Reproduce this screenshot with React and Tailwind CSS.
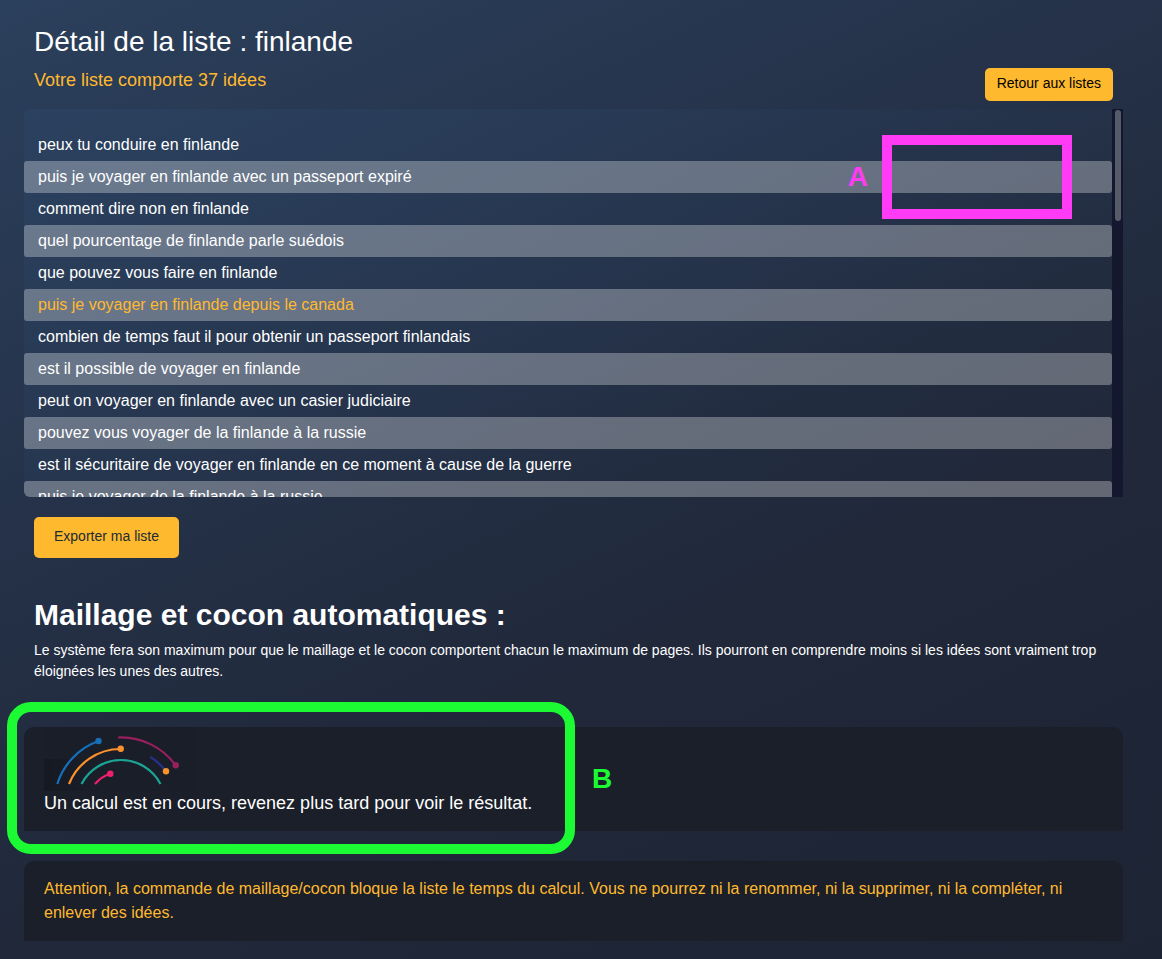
import React from 'react';

const ideas = [
  { id: 1, text: 'peux tu conduire en finlande' },
  { id: 2, text: 'puis je voyager en finlande avec un passeport expiré' },
  { id: 3, text: 'comment dire non en finlande' },
  { id: 4, text: 'quel pourcentage de finlande parle suédois' },
  { id: 5, text: 'que pouvez vous faire en finlande' },
  { id: 6, text: 'puis je voyager en finlande depuis le canada', active: true },
  { id: 7, text: 'combien de temps faut il pour obtenir un passeport finlandais' },
  { id: 8, text: 'est il possible de voyager en finlande' },
  { id: 9, text: 'peut on voyager en finlande avec un casier judiciaire' },
  { id: 10, text: 'pouvez vous voyager de la finlande à la russie' },
  { id: 11, text: 'est il sécuritaire de voyager en finlande en ce moment à cause de la guerre' },
  { id: 12, text: 'puis je voyager de la finlande à la russie' },
];

const Loader = () => (
  <svg width="152" height="64" viewBox="0 0 152 64" fill="none" strokeWidth="2.2" className="block" aria-hidden="true">
    <defs>
      <linearGradient id="loaderShade" x1="0" y1="0" x2="1" y2="0">
        <stop offset="0" stopColor="#161922" />
        <stop offset="1" stopColor="#1a1e29" />
      </linearGradient>
    </defs>
    <rect width="152" height="64" fill="#1a1e29" />
    <rect y="32" width="50" height="32" fill="url(#loaderShade)" />
    <path d="M13.3 57A67 67 0 0 1 54.5 14" stroke="#176fb8" />
    <circle cx="54.5" cy="14" r="3.2" fill="#176fb8" />
    <path d="M25 57A55.5 55.5 0 0 1 76.5 22" stroke="#fb912b" />
    <circle cx="76.7" cy="21.8" r="3.2" fill="#fb912b" />
    <path d="M37.5 57A44.5 44.5 0 0 1 116.5 57" stroke="#1ba394" />
    <path d="M51 57A32.6 32.6 0 0 1 66.3 46.7" stroke="#f0206f" />
    <circle cx="66.3" cy="46.7" r="3.2" fill="#f0206f" />
    <path d="M74 10.5A67.5 67.5 0 0 1 131.7 38.3" stroke="#97205d" />
    <circle cx="131.7" cy="38.3" r="3.2" fill="#97205d" />
    <path d="M106.3 30A56 56 0 0 1 122 44.3" stroke="#263189" />
    <circle cx="122" cy="44.3" r="3.2" fill="#fb912b" />
  </svg>
);

const IdeaList = () => (
  <div className="flex h-[388px] overflow-hidden rounded-l-md bg-[linear-gradient(155deg,#2c466877,#2c466800_70%)]">
    <ul className="flex-1 overflow-y-auto pt-5 [scrollbar-width:none]">
      {ideas.map((idea) => (
        <li
          key={idea.id}
          className={`h-8 rounded-[3px] px-[14px] leading-8 even:bg-[#ffffff4d] ${idea.active ? 'text-[#ffb92e]' : ''}`}
        >
          {idea.text}
        </li>
      ))}
    </ul>
    {/* Scrollbar */}
    <div className="flex w-[11px] justify-center bg-[#14182e] pt-px">
      <div className="h-[111px] w-[6px] rounded-full bg-[#565b6a]"></div>
    </div>
  </div>
);

const App = () => {
  return (
    <div className="relative min-h-screen bg-[linear-gradient(155deg,#2b405c_0%,#253249_35%,#202839_65%,#1d2434_100%)] pt-6 pr-[39px] pb-[18px] pl-6 font-['Liberation_Sans',sans-serif] text-white">
      {/* Header */}
      <header className="flex items-end justify-between px-[10px] pb-2">
        <div className="pb-[9px]">
          <h1 className="text-[28px] leading-9">Détail de la liste : finlande</h1>
          <p className="pt-2 text-lg leading-6 text-[#ffb92e]">Votre liste comporte 37 idées</p>
        </div>
        <button className="h-[33px] rounded-[5px] bg-[#ffb92e] px-3 pb-1 text-sm text-black">Retour aux listes</button>
      </header>

      <IdeaList />

      <section className="px-[10px] pt-5">
        <button className="h-[41px] rounded-[5px] bg-[#ffb92e] px-5 pb-1 text-sm text-[#212b33]">Exporter ma liste</button>
        <h2 className="pt-[37px] text-[30px] leading-10 font-bold">Maillage et cocon automatiques :</h2>
        <p className="pt-[5px] text-sm leading-[21px]">
          Le système fera son maximum pour que le maillage et le cocon comportent chacun le maximum de pages. Ils pourront en comprendre moins si les idées sont vraiment trop éloignées les unes des autres.
        </p>
      </section>

      {/* Status */}
      <section className="relative mt-[45px] rounded-t-[10px] bg-[#1a1f2a] px-5 pb-4">
        <Loader />
        <p className="text-lg leading-6">Un calcul est en cours, revenez plus tard pour voir le résultat.</p>
        <div className="absolute -top-[25px] -left-[17px] h-[152px] w-[568px] rounded-3xl border-10 border-[#1cfa34]"></div>
        <span className="absolute top-8 left-[568px] text-[28px] leading-10 font-bold text-[#1cfa34]">B</span>
      </section>

      <section className="mt-[30px] rounded-t-[10px] bg-[#1a1f2a] px-5 py-4">
        <p className="leading-6 text-[#ffb92e]">
          Attention, la commande de maillage/cocon bloque la liste le temps du calcul. Vous ne pourrez ni la renommer, ni la supprimer, ni la compléter, ni enlever des idées.
        </p>
      </section>

      {/* Marker A */}
      <div className="absolute top-[135px] right-[90px] flex items-center gap-[14px]">
        <span className="text-[28px] leading-10 font-bold text-[#ff3bf5]">A</span>
        <div className="h-[84px] w-[190px] border-10 border-[#ff3bf5]"></div>
      </div>
    </div>
  );
};

export default App;
